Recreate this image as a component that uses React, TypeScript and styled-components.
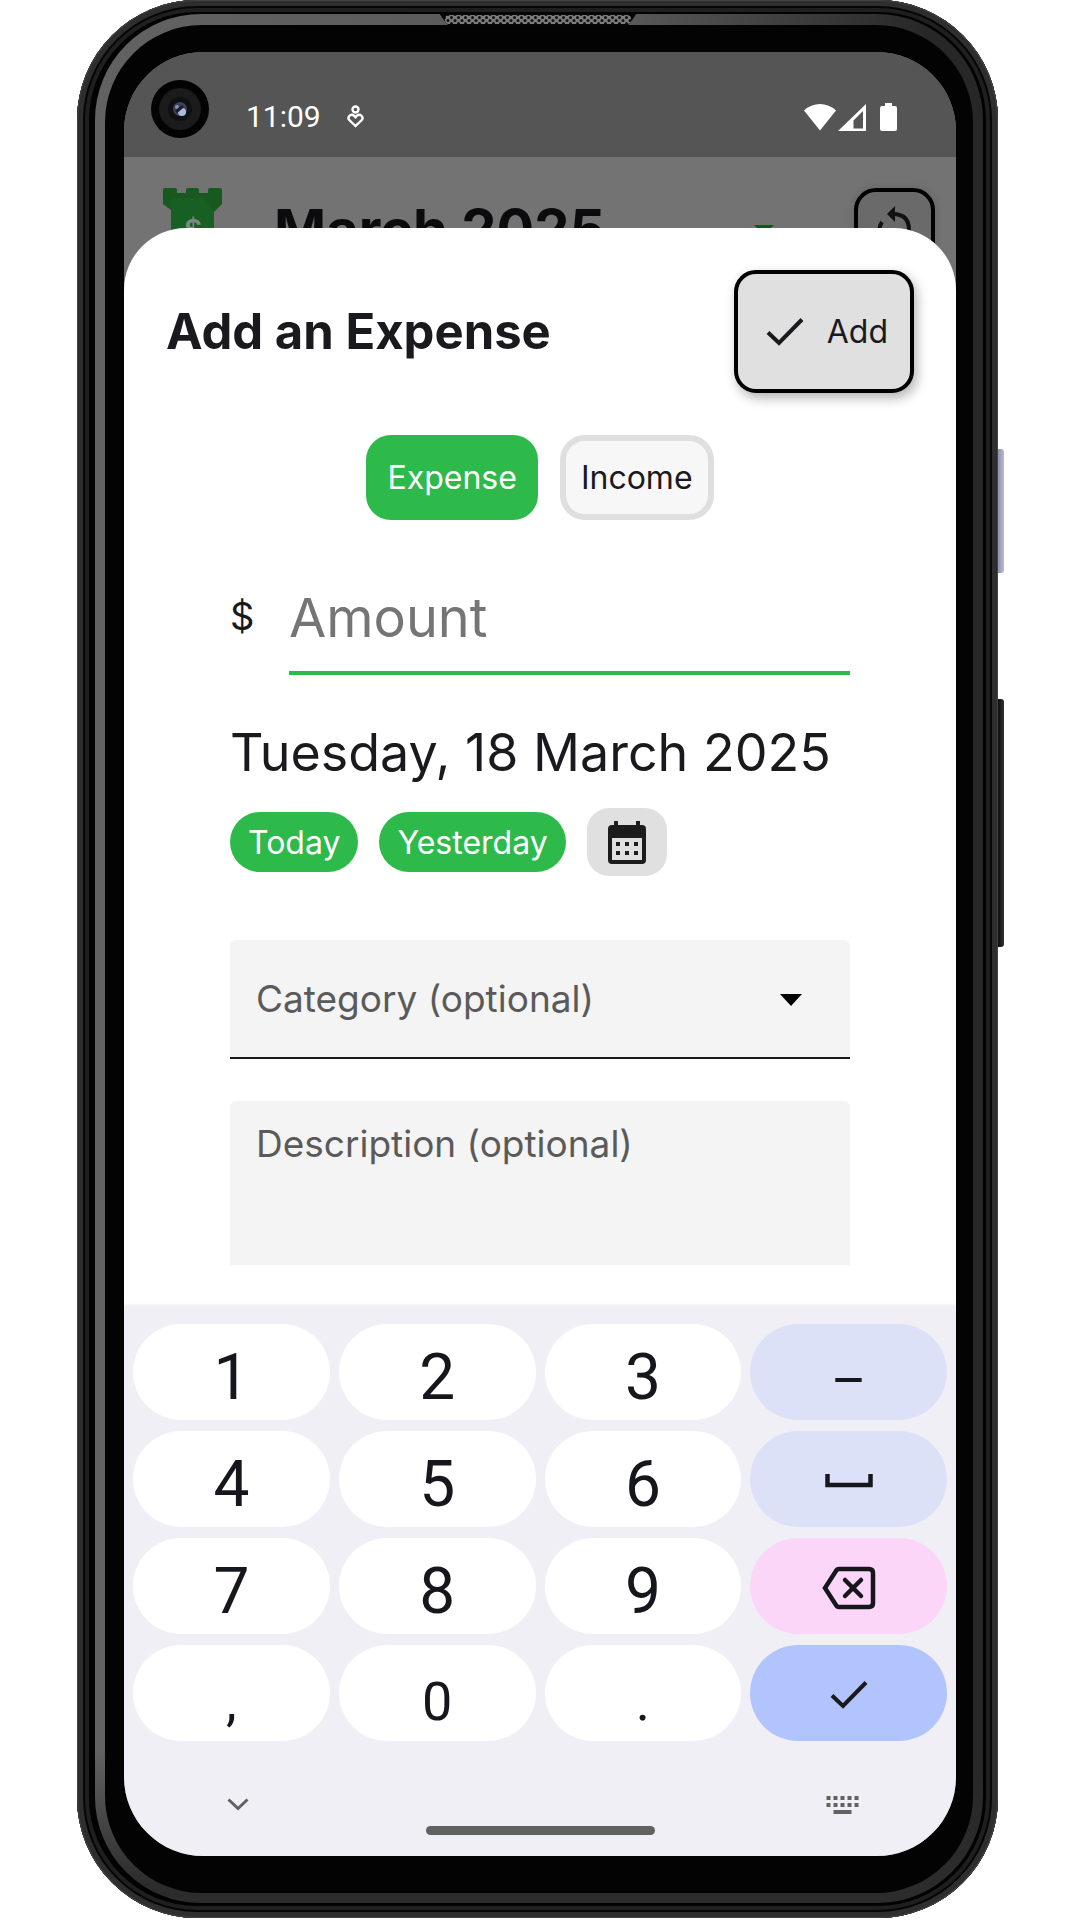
import React, { useState } from "react";
import styled, { createGlobalStyle, css } from "styled-components";

const green = "#2eb94b";
const ink = "#1a191e";

const GlobalStyle = createGlobalStyle`
  *, *::before, *::after { box-sizing: border-box; }
  body {
    margin: 0;
    background: #ffffff;
    color: ${ink};
    font-family: Inter, "Open Sans", sans-serif;
  }
  button, input, select, textarea {
    margin: 0;
    padding: 0;
    border: 0;
    border-radius: 0;
    background: none;
    color: inherit;
    font: inherit;
    outline: none;
  }
  button { cursor: pointer; }
  svg { display: block; flex: none; }
`;

/* ---------- Device ---------- */

const Page = styled.div`
  padding: 0 82px 0 77px;
`;

const Phone = styled.div`
  position: relative;
  padding: 14px 15px 15px 18px;
  border-radius: 120px;
  background: #020202;
  box-shadow:
    inset 0 0 0 1px #444444,
    inset 0 0 0 6px #2e2e2e,
    inset 0 0 0 8px #060606,
    inset 0 0 0 12px #1f1f1f;
`;

const Lip = styled.div`
  padding: 11px 10px 10px;
  border-radius: 106px;
  background:
    linear-gradient(to bottom, transparent 92%, #2c2c2c 99%),
    linear-gradient(to right, #626262, #585858 60%, #272727 94%);
`;

const Glass = styled.div`
  padding: 27px 17px 37px 19px;
  border-radius: 97px;
  background: #030303;
`;

const Screen = styled.main`
  display: flex;
  flex-direction: column;
  overflow: hidden;
  border-radius: 79px;
  background: #737373;
`;

const Speaker = styled.svg`
  position: absolute;
  top: 13px;
  left: 50%;
  transform: translateX(-50%);
`;

const SideButton = styled.span<{ $top: number; $height: number; $color: string }>`
  position: absolute;
  left: 100%;
  top: ${(p) => p.$top}px;
  width: 6px;
  height: ${(p) => p.$height}px;
  border-radius: 0 3px 3px 0;
  background: ${(p) => p.$color};
`;

/* ---------- Status bar and dimmed header ---------- */

const StatusBar = styled.div`
  position: relative;
  display: flex;
  align-items: center;
  height: 105px;
  padding: 24px 59px 0 122px;
  background: #555555;
  color: #ffffff;
  font: 400 30px/36px Roboto, sans-serif;
`;

const Camera = styled.svg`
  position: absolute;
  left: 27px;
  top: 28px;
`;

const StatusNote = styled.svg`
  margin-left: 26px;
`;

const StatusIcons = styled.div`
  display: flex;
  gap: 2px;
  margin-left: auto;
  & > :last-child { margin-left: 12px; }
`;

const AppHeader = styled.header`
  display: flex;
  align-items: flex-start;
  height: 141px;
  padding: 31px 21px 0 39px;
  overflow: hidden;
`;

const Month = styled.h2`
  margin: 10px auto 0 51px;
  color: #0b0b0d;
  font-size: 56px;
  line-height: 64px;
  font-weight: 700;
`;

const MonthArrow = styled.svg`
  margin: 37px 80px 0 0;
`;

const ResetButton = styled.button`
  display: flex;
  justify-content: center;
  width: 81px;
  height: 90px;
  padding-top: 14px;
  border: 4px solid #000000;
  border-radius: 22px;
  background: #6a6a6a;
  box-shadow: 0 0 8px rgba(0, 0, 0, 0.15);
`;

/* ---------- Sheet ---------- */

const Sheet = styled.section`
  position: relative;
  display: flex;
  flex-direction: column;
  margin-top: -70px;
  padding: 42px 42px 41px;
  border-radius: 62px 62px 0 0;
  background: #ffffff;
`;

const SheetHeader = styled.div`
  display: flex;
  align-items: center;
  justify-content: space-between;
`;

const Title = styled.h1`
  margin: 0;
  font-size: 49px;
  line-height: 60px;
  font-weight: 700;
`;

const AddButton = styled.button`
  display: flex;
  align-items: center;
  justify-content: space-between;
  width: 180px;
  height: 123px;
  padding: 0 22px 0 28px;
  border: 4px solid #000000;
  border-radius: 22px;
  background: #e0e0e0;
  box-shadow: 3px 5px 12px rgba(0, 0, 0, 0.3);
  font-size: 32px;
`;

const Segments = styled.div`
  display: flex;
  justify-content: center;
  gap: 22px;
  margin-top: 42px;
`;

const Segment = styled.button<{ $active: boolean }>`
  height: 85px;
  padding: 0 15px;
  border: 6px solid ${(p) => (p.$active ? green : "#dfdfdf")};
  border-radius: 25px;
  background: ${(p) => (p.$active ? green : "#f7f7f7")};
  color: ${(p) => (p.$active ? "#ffffff" : ink)};
  font-size: 32px;
`;

const Form = styled.form`
  display: flex;
  flex-direction: column;
  margin-top: 55px;
  padding: 0 64px;
`;

const AmountRow = styled.div`
  display: flex;
  align-items: stretch;
`;

const Currency = styled.label`
  width: 59px;
  font-size: 38px;
  line-height: 82px;
`;

const AmountInput = styled.input`
  flex: 1;
  min-width: 0;
  height: 100px;
  padding-bottom: 12px;
  border-bottom: 4px solid ${green};
  font-size: 54px;
  &::placeholder { color: #757575; opacity: 1; }
`;

const DateText = styled.p`
  margin: 46px 0 0;
  font-size: 52px;
  line-height: 64px;
  white-space: nowrap;
`;

const DateRow = styled.div`
  display: flex;
  align-items: center;
  gap: 21px;
  margin-top: 23px;
`;

const Chip = styled.button`
  height: 60px;
  padding: 0 18px;
  border-radius: 30px;
  background: ${green};
  color: #ffffff;
  font-size: 32px;
`;

const CalendarButton = styled.button`
  display: flex;
  align-items: center;
  justify-content: center;
  width: 80px;
  height: 68px;
  border-radius: 22px;
  background: #e0e0e0;
`;

const fieldBox = css`
  width: 100%;
  border-radius: 6px 6px 0 0;
  background: #f4f4f4;
  color: #5a5a5a;
  font-size: 37px;
`;

const SelectField = styled.div`
  position: relative;
  margin-top: 64px;
`;

const CategorySelect = styled.select`
  ${fieldBox}
  display: block;
  height: 119px;
  padding: 0 80px 0 26px;
  border-bottom: 2px solid #1a191e;
  appearance: none;
`;

const SelectArrow = styled.svg`
  position: absolute;
  right: 48px;
  top: 54px;
  pointer-events: none;
`;

const Description = styled.textarea`
  ${fieldBox}
  display: block;
  height: 164px;
  margin-top: 42px;
  padding: 22px 26px;
  line-height: 42px;
  resize: none;
  &::placeholder { color: #5a5a5a; opacity: 1; }
`;

/* ---------- Keyboard ---------- */

const Keyboard = styled.section`
  position: relative;
  padding: 18px 9px 21px;
  background: #f0eff6;
  box-shadow: 0 0 4px rgba(0, 0, 0, 0.12);
`;

const Keys = styled.div`
  display: grid;
  grid-template-columns: repeat(4, 1fr);
  gap: 11px 9px;
`;

const Key = styled.button<{ $color?: string; $small?: boolean }>`
  display: flex;
  align-items: center;
  justify-content: center;
  height: 96px;
  padding-top: ${(p) => (p.$small ? 18 : 12)}px;
  border-radius: 48px;
  background: ${(p) => p.$color ?? "#ffffff"};
  color: #16171d;
  font-family: Roboto, sans-serif;
  font-size: ${(p) => (p.$small ? 54 : 64)}px;
  line-height: 72px;
`;

const IconKey = styled(Key)`
  padding-top: 4px;
`;

const NavRow = styled.div`
  display: flex;
  align-items: center;
  justify-content: space-between;
  margin-top: 50px;
  padding: 0 88px 0 94px;
`;

const NavButton = styled.button`
  display: flex;
  align-items: center;
  height: 28px;
`;

const HomeBar = styled.div`
  width: 229px;
  height: 9px;
  margin: 7px auto 0;
  border-radius: 5px;
  background: #616161;
`;

const CheckIcon = () => (
  <svg width="38" height="30" viewBox="0 0 38 30" fill="none" aria-hidden="true">
    <path d="M2 15.5 13 26 36 2.5" stroke="#1a191e" strokeWidth="4" />
  </svg>
);

const digits = (values: string[]) => values.map((v) => <Key key={v} type="button">{v}</Key>);

export default function App() {
  const [kind, setKind] = useState("Expense");

  return (
    <>
      <GlobalStyle />
      <Page>
        <Phone>
          <Speaker width="198" height="13" viewBox="0 0 198 13" aria-hidden="true">
            <defs>
              <pattern id="mesh" width="7" height="6" patternUnits="userSpaceOnUse">
                <rect width="7" height="6" fill="#7c7c7c" />
                <circle cx="2" cy="1.5" r="1.5" fill="#111" />
                <circle cx="5.5" cy="4.5" r="1.5" fill="#111" />
              </pattern>
            </defs>
            <path d="M0 0h198l-7 10q-2 3-6 3H13q-4 0-6-3z" fill="#050505" />
            <rect x="6" y="2" width="186" height="9" rx="4" fill="url(#mesh)" />
          </Speaker>
          <SideButton $top={449} $height={124} $color="linear-gradient(to right, #8f90ab, #b9bad6)" />
          <SideButton $top={699} $height={248} $color="linear-gradient(to right, #0c0c0c, #333333)" />
          <Lip>
            <Glass>
              <Screen>
                <StatusBar>
                  <Camera width="58" height="58" viewBox="0 0 58 58" aria-hidden="true">
                    <circle cx="29" cy="29" r="29" fill="#030303" />
                    <circle cx="29" cy="29" r="21" fill="#1b1b1b" />
                    <circle cx="29" cy="29" r="12" fill="#101013" />
                    <circle cx="29" cy="29" r="7" fill="#3d4259" />
                    <circle cx="31" cy="32" r="4" fill="#a9bcdd" />
                    <circle cx="26" cy="27" r="2" fill="#8794b4" />
                    <path d="M25 32l7-6" stroke="#1c1e2c" strokeWidth="3" />
                  </Camera>
                  <span>11:09</span>
                  <StatusNote width="17" height="23" viewBox="0 0 17 23" fill="none" stroke="#fff" strokeWidth="2.4" aria-hidden="true">
                    <circle cx="8.500" cy="4.500" r="3" />
                    <path d="M8.500 21 2.300 15a3.200 3.200 0 0 1 4.500-4.500l1.700 1.700 1.700-1.700a3.200 3.200 0 0 1 4.500 4.500z" />
                  </StatusNote>
                  <StatusIcons>
                    <svg width="32" height="28" viewBox="0 0 32 28" fill="#fff" aria-hidden="true">
                      <path d="M16 27.500 0 7.500Q7 1 16 1t16 6.500z" />
                    </svg>
                    <svg width="28" height="28" viewBox="0 0 28 28" aria-hidden="true">
                      <path d="M0 28 28 1v27z" fill="#fff" />
                      <path d="M15.500 17.500 25 8v17.500h-9.500z" fill="#555" />
                    </svg>
                    <svg width="17" height="28" viewBox="0 0 17 28" fill="#fff" aria-hidden="true">
                      <path d="M5 0h7v3h3q2 0 2 2v21q0 2-2 2H2q-2 0-2-2V5q0-2 2-2h3z" />
                    </svg>
                  </StatusIcons>
                </StatusBar>

                <AppHeader>
                  <svg width="60" height="80" viewBox="0 0 60 80" aria-hidden="true">
                    <path d="M2 0h10q2 0 2 2v3h9V2q0-2 2-2h9q2 0 2 2v3h9V2q0-2 2-2h10q2 0 2 2v14L51 24v56H8V22L0 16V2q0-2 2-2z" fill="#17591f" />
                    <path d="M8 10h32l11 12v58H8z" fill="#175f22" />
                    <text x="30" y="52" textAnchor="middle" fontFamily="Inter, sans-serif" fontSize="28" fontWeight="600" fill="#7c8a7e">$</text>
                  </svg>
                  <Month>March 2025</Month>
                  <MonthArrow width="20" height="10" viewBox="0 0 20 10" aria-hidden="true">
                    <path d="M0 0h20L10 10z" fill="#0c5a18" />
                  </MonthArrow>
                  <ResetButton type="button" aria-label="Reset month">
                    <svg width="38" height="44" viewBox="0 0 38 44" aria-hidden="true">
                      <path d="M19 0v16L11 8z" fill="#111" />
                      <path d="M17 8q16 0 16 16t-14 16M6 16Q1 23 5 33" fill="none" stroke="#111" strokeWidth="4" />
                    </svg>
                  </ResetButton>
                </AppHeader>

                <Sheet>
                  <SheetHeader>
                    <Title>Add an Expense</Title>
                    <AddButton type="submit" form="entry">
                      <CheckIcon />
                      Add
                    </AddButton>
                  </SheetHeader>
                  <Segments>
                    {["Expense", "Income"].map((name) => (
                      <Segment
                        key={name}
                        type="button"
                        $active={kind === name}
                        aria-pressed={kind === name}
                        onClick={() => setKind(name)}
                      >
                        {name}
                      </Segment>
                    ))}
                  </Segments>
                  <Form id="entry" onSubmit={(e) => e.preventDefault()}>
                    <AmountRow>
                      <Currency htmlFor="amount">$</Currency>
                      <AmountInput id="amount" inputMode="decimal" placeholder="Amount" />
                    </AmountRow>
                    <DateText>Tuesday, 18 March 2025</DateText>
                    <DateRow>
                      <Chip type="button">Today</Chip>
                      <Chip type="button">Yesterday</Chip>
                      <CalendarButton type="button" aria-label="Pick a date">
                        <svg width="38" height="43" viewBox="0 0 38 43" aria-hidden="true">
                          <path d="M6 0h4v4h18V0h4v4h2q4 0 4 4v31q0 4-4 4H4q-4 0-4-4V8q0-4 4-4h2z" fill="#1c1c1c" />
                          <path d="M4 17h30v22H4z" fill="#e0e0e0" />
                          <path d="M8 21h4v4H8zM17 21h4v4h-4zM26 21h4v4h-4zM8 30h4v4H8zM17 30h4v4h-4zM26 30h4v4h-4z" fill="#1c1c1c" />
                        </svg>
                      </CalendarButton>
                    </DateRow>
                    <SelectField>
                      <CategorySelect aria-label="Category" defaultValue="">
                        <option value="">Category (optional)</option>
                      </CategorySelect>
                      <SelectArrow width="22" height="12" viewBox="0 0 22 12" aria-hidden="true">
                        <path d="M0 0h22L11 12z" fill="#000" />
                      </SelectArrow>
                    </SelectField>
                    <Description aria-label="Description" placeholder="Description (optional)" />
                  </Form>
                </Sheet>

                <Keyboard aria-label="Number keyboard">
                  <Keys>
                    {digits(["1", "2", "3"])}
                    <Key type="button" $color="#dde1f8" $small>–</Key>
                    {digits(["4", "5", "6"])}
                    <IconKey type="button" $color="#dde1f8" aria-label="Space">
                      <svg width="48" height="14" viewBox="0 0 48 14" fill="none" aria-hidden="true">
                        <path d="M2.500 0v11h43V0" stroke="#16171d" strokeWidth="4.500" />
                      </svg>
                    </IconKey>
                    {digits(["7", "8", "9"])}
                    <IconKey type="button" $color="#fcd6f8" aria-label="Delete">
                      <svg width="54" height="44" viewBox="0 0 54 44" fill="none" stroke="#16171d" strokeWidth="4.500" aria-hidden="true">
                        <path d="M17 3h30q4 0 4 4v30q0 4-4 4H17q-2 0-3-2L3 22 14 5q1-2 3-2z" />
                        <path d="m23 14 16 16M39 14 23 30" strokeLinecap="round" />
                      </svg>
                    </IconKey>
                    <Key type="button" $small>,</Key>
                    <Key type="button" $small>0</Key>
                    <Key type="button" $small>.</Key>
                    <IconKey type="button" $color="#b2c4fe" aria-label="Done">
                      <CheckIcon />
                    </IconKey>
                  </Keys>
                  <NavRow>
                    <NavButton type="button" aria-label="Hide keyboard">
                      <svg width="22" height="14" viewBox="0 0 22 14" fill="none" aria-hidden="true">
                        <path d="m1.500 1.500 9.500 9 9.500-9" stroke="#616161" strokeWidth="3" />
                      </svg>
                    </NavButton>
                    <NavButton type="button" aria-label="Switch keyboard">
                      <svg width="33" height="20" viewBox="0 0 33 20" fill="#616161" aria-hidden="true">
                        {[0, 7, 14, 21, 28].map((x) => (
                          <path key={x} d={`M${x + 0.5} 1h4v4h-4zM${x + 0.5} 8h4v4h-4z`} />
                        ))}
                        <path d="M7.500 15h18v4h-18z" />
                      </svg>
                    </NavButton>
                  </NavRow>
                  <HomeBar />
                </Keyboard>
              </Screen>
            </Glass>
          </Lip>
        </Phone>
      </Page>
    </>
  );
}
